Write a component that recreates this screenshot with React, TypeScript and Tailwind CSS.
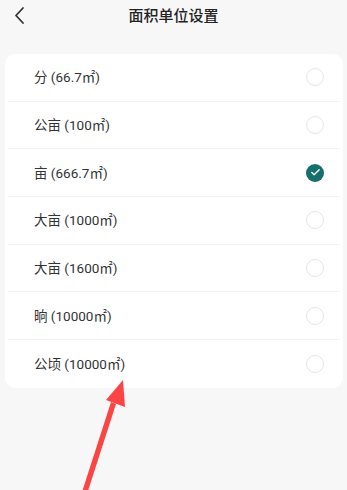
import { Check } from "lucide-react";

const units = [
  { label: "分 (66.7㎡)", checked: false },
  { label: "公亩 (100㎡)", checked: false },
  { label: "亩 (666.7㎡)", checked: true },
  { label: "大亩 (1000㎡)", checked: false },
  { label: "大亩 (1600㎡)", checked: false },
  { label: "晌 (10000㎡)", checked: false },
  { label: "公顷 (10000㎡)", checked: false },
];

export default function App() {
  return (
    <div
      className="relative w-[347px] h-[490px] overflow-hidden bg-[#f7f7f7] text-[#333]"
      style={{ fontFamily: 'Roboto, "Noto Sans CJK SC", sans-serif' }}
    >
      <div className="relative flex items-center justify-center h-[32px]">
        <svg
          className="absolute left-[13px] top-[6px]"
          width="14"
          height="20"
          viewBox="0 0 14 20"
          fill="none"
        >
          <path d="M10 2 L3 9.5 L10 17" stroke="#333" strokeWidth="1.8" strokeLinecap="round" strokeLinejoin="round" />
        </svg>
        <span className="text-[15px] font-medium text-[#222]">面积单位设置</span>
      </div>

      <div className="mx-[5px] mt-[22px] w-[338px] rounded-[10px] bg-white">
        {units.map((u, i) => (
          <div
            key={i}
            className={
              "mx-[3px] h-[47.7px] flex items-center justify-between pl-[26px] pr-[16px] " +
              (i < units.length - 1 ? "border-b border-[#f1f1f1]" : "")
            }
          >
            <span className="text-[13.5px] text-[#333]">{u.label}</span>
            {u.checked ? (
              <span className="flex items-center justify-center w-[18px] h-[18px] rounded-full bg-[#15706b]">
                <Check size={11} strokeWidth={3} color="#fff" />
              </span>
            ) : (
              <span className="w-[18px] h-[18px] rounded-full border-[1.5px] border-[#e6e6e6]" />
            )}
          </div>
        ))}
      </div>

      <svg className="absolute left-0 top-0" width="347" height="490" viewBox="0 0 347 490">
        <path d="M82 492 L111 402 L116 404 L87 494 Z" fill="#fb4545" />
        <path d="M123 380 L106 400 L125 407 Z" fill="#fb4545" />
      </svg>
    </div>
  );
}
